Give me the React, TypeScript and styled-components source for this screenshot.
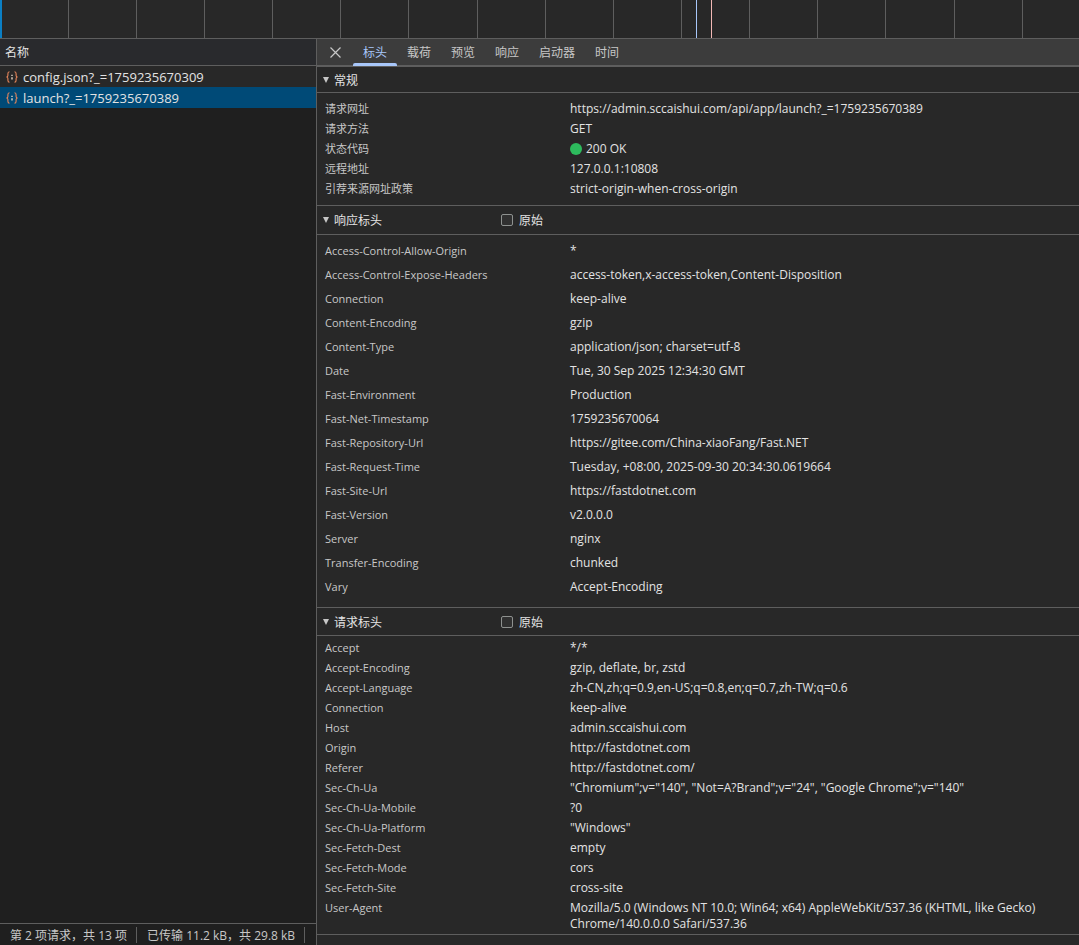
import * as React from "react";
import styled, { createGlobalStyle } from "styled-components";

const GlobalStyle = createGlobalStyle`
  html, body {
    margin: 0;
    padding: 0;
    height: 100%;
    overflow: hidden;
    background: #282828;
  }
  #root {
    height: 100%;
  }
`;

const fontStack = `"Open Sans", "Noto Sans CJK SC", sans-serif`;

const Page = styled.div`
  width: 1079px;
  height: 945px;
  display: flex;
  flex-direction: column;
  font-family: ${fontStack};
  font-size: 12px;
  color: #e3e3e3;
  overflow: hidden;
`;

const Overview = styled.div`
  height: 38px;
  flex: none;
  position: relative;
  background: #282828;
  border-bottom: 1px solid #5e5e5e;
`;

const GridLine = styled.div<{ $x: number; $color?: string }>`
  position: absolute;
  top: 0;
  bottom: 0;
  left: ${(p) => p.$x}px;
  width: 1px;
  background: ${(p) => p.$color ?? "#5e5e5e"};
`;

const LeftMarker = styled.div`
  position: absolute;
  top: 0;
  bottom: 0;
  left: 0;
  width: 2px;
  background: #0b7fc4;
`;

const Body = styled.div`
  flex: 1;
  min-height: 0;
  display: flex;
`;

const RequestPane = styled.div`
  width: 316px;
  flex: none;
  display: flex;
  flex-direction: column;
  background: #1f1f1f;
  border-right: 1px solid #5e5e5e;
`;

const NameHeader = styled.div`
  height: 26px;
  flex: none;
  display: flex;
  align-items: center;
  padding-left: 5px;
  font-size: 12px;
  color: #e3e3e3;
  background: #292a2d;
  border-bottom: 1px solid #5e5e5e;
`;

const RequestList = styled.div`
  flex: 1;
  min-height: 0;
`;

const RequestRow = styled.div<{ $selected?: boolean }>`
  height: 21px;
  display: flex;
  align-items: center;
  gap: 4px;
  padding-left: 5px;
  font-size: 13px;
  color: #e3e3e3;
  background: ${(p) => (p.$selected ? "#004a77" : "#282828")};
`;

const Footer = styled.div`
  height: 21px;
  flex: none;
  display: flex;
  align-items: center;
  font-size: 12px;
  color: #c7c7c7;
  border-top: 1px solid #5e5e5e;
`;

const FooterItem = styled.div`
  height: 16px;
  display: flex;
  align-items: center;
  padding: 0 9px 0 10px;
  border-right: 1px solid #5e5e5e;
  white-space: nowrap;
`;

const DetailPane = styled.div`
  flex: 1;
  min-width: 0;
  display: flex;
  flex-direction: column;
  background: #282828;
`;

const TabBar = styled.div`
  height: 26px;
  flex: none;
  display: flex;
  align-items: stretch;
  background: #3c3c3c;
  border-bottom: 2px solid #5e5e5e;
  box-sizing: content-box;
`;

const CloseButton = styled.div`
  width: 36px;
  flex: none;
  display: flex;
  align-items: center;
  justify-content: center;
  color: #c7c7c7;
`;

const Tab = styled.div<{ $active?: boolean }>`
  display: flex;
  align-items: center;
  padding: 0 10px;
  position: relative;
  font-size: 12px;
  color: ${(p) => (p.$active ? "#a8c7fa" : "#c7c7c7")};
  ${(p) =>
    p.$active &&
    `&::after {
      content: "";
      position: absolute;
      left: 0;
      right: 0;
      bottom: -1px;
      height: 3px;
      border-radius: 2px 2px 0 0;
      background: #a8c7fa;
    }`}
`;

const Sections = styled.div`
  flex: 1;
  min-height: 0;
  overflow: hidden;
`;

const SectionHeader = styled.div<{ $height: number }>`
  height: ${(p) => p.$height}px;
  display: flex;
  align-items: center;
  border-bottom: 1px solid #5e5e5e;
  font-size: 12px;
  color: #e3e3e3;
`;

const Caret = styled.span`
  width: 0;
  height: 0;
  margin: 0 5px 0 6px;
  border-left: 3.5px solid transparent;
  border-right: 3.5px solid transparent;
  border-top: 6px solid #c7c7c7;
`;

const SectionTitle = styled.span`
  width: 167px;
  flex: none;
`;

const RawToggle = styled.label`
  display: flex;
  align-items: center;
  gap: 6px;
`;

const CheckBox = styled.span`
  width: 10px;
  height: 10px;
  border: 1px solid #8e918f;
  border-radius: 2px;
  background: #303030;
`;

const Rows = styled.div<{ $padTop: number; $padBottom: number }>`
  padding: ${(p) => p.$padTop}px 0 ${(p) => p.$padBottom}px;
  border-bottom: 1px solid #5e5e5e;
`;

const Row = styled.div<{ $rowHeight: number }>`
  display: grid;
  grid-template-columns: 245px 1fr;
  padding-left: 8px;
  padding-right: 12px;
  min-height: ${(p) => p.$rowHeight}px;
  line-height: 16px;
  align-items: start;
  padding-top: ${(p) => (p.$rowHeight - 16) / 2}px;
  padding-bottom: ${(p) => (p.$rowHeight - 16) / 2}px;
  box-sizing: border-box;
`;

const RowName = styled.div`
  font-size: 11px;
  color: #c7c7c7;
`;

const RowValue = styled.div`
  font-size: 12px;
  color: #e3e3e3;
  display: flex;
  align-items: center;
  gap: 4px;
`;

const StatusDot = styled.span`
  width: 12px;
  height: 12px;
  border-radius: 50%;
  background: #2dbb5d;
`;

const FetchIcon = () => (
  <svg width="14" height="14" viewBox="0 0 14 14" fill="none" stroke="#e8875b" strokeWidth="1.1">
    <path d="M4.5 1.8C3 1.8 2.9 2.6 2.9 3.8V5.4C2.9 6.2 2.4 6.8 1.5 7C2.4 7.2 2.9 7.8 2.9 8.6V10.2C2.9 11.4 3 12.2 4.5 12.2" />
    <path d="M9.5 1.8C11 1.8 11.1 2.6 11.1 3.8V5.4C11.1 6.2 11.6 6.8 12.5 7C11.6 7.2 11.1 7.8 11.1 8.6V10.2C11.1 11.4 11 12.2 9.5 12.2" />
    <path d="M7 4.8V5.9M7 7.3V9.4" stroke="#f0e0d0" strokeWidth="1.3" />
  </svg>
);

const CloseIcon = () => (
  <svg width="11" height="11" viewBox="0 0 11 11" stroke="currentColor" strokeWidth="1.2">
    <path d="M0.5 0.5L10.5 10.5M10.5 0.5L0.5 10.5" />
  </svg>
);

const gridXs = [68, 136, 204, 272, 340, 408, 477, 545, 613, 681, 749, 817, 885, 954, 1022];

const generalRows: [string, React.ReactNode][] = [
  ["请求网址", "https://admin.sccaishui.com/api/app/launch?_=1759235670389"],
  ["请求方法", "GET"],
  [
    "状态代码",
    <>
      <StatusDot />
      200 OK
    </>,
  ],
  ["远程地址", "127.0.0.1:10808"],
  ["引荐来源网址政策", "strict-origin-when-cross-origin"],
];

const responseRows: [string, string][] = [
  ["Access-Control-Allow-Origin", "*"],
  ["Access-Control-Expose-Headers", "access-token,x-access-token,Content-Disposition"],
  ["Connection", "keep-alive"],
  ["Content-Encoding", "gzip"],
  ["Content-Type", "application/json; charset=utf-8"],
  ["Date", "Tue, 30 Sep 2025 12:34:30 GMT"],
  ["Fast-Environment", "Production"],
  ["Fast-Net-Timestamp", "1759235670064"],
  ["Fast-Repository-Url", "https://gitee.com/China-xiaoFang/Fast.NET"],
  ["Fast-Request-Time", "Tuesday, +08:00, 2025-09-30 20:34:30.0619664"],
  ["Fast-Site-Url", "https://fastdotnet.com"],
  ["Fast-Version", "v2.0.0.0"],
  ["Server", "nginx"],
  ["Transfer-Encoding", "chunked"],
  ["Vary", "Accept-Encoding"],
];

const requestRows: [string, string][] = [
  ["Accept", "*/*"],
  ["Accept-Encoding", "gzip, deflate, br, zstd"],
  ["Accept-Language", "zh-CN,zh;q=0.9,en-US;q=0.8,en;q=0.7,zh-TW;q=0.6"],
  ["Connection", "keep-alive"],
  ["Host", "admin.sccaishui.com"],
  ["Origin", "http://fastdotnet.com"],
  ["Referer", "http://fastdotnet.com/"],
  ["Sec-Ch-Ua", `"Chromium";v="140", "Not=A?Brand";v="24", "Google Chrome";v="140"`],
  ["Sec-Ch-Ua-Mobile", "?0"],
  ["Sec-Ch-Ua-Platform", `"Windows"`],
  ["Sec-Fetch-Dest", "empty"],
  ["Sec-Fetch-Mode", "cors"],
  ["Sec-Fetch-Site", "cross-site"],
  [
    "User-Agent",
    "Mozilla/5.0 (Windows NT 10.0; Win64; x64) AppleWebKit/537.36 (KHTML, like Gecko) Chrome/140.0.0.0 Safari/537.36",
  ],
];

const App = () => {
  return (
    <Page>
      <GlobalStyle />
      <Overview>
        <LeftMarker />
        {gridXs.map((x) => (
          <GridLine key={x} $x={x} />
        ))}
        <GridLine $x={696} $color="#a8c7fa" />
        <GridLine $x={711} $color="#f2b8b5" />
      </Overview>
      <Body>
        <RequestPane>
          <NameHeader>名称</NameHeader>
          <RequestList>
            <RequestRow>
              <FetchIcon />
              config.json?_=1759235670309
            </RequestRow>
            <RequestRow $selected>
              <FetchIcon />
              launch?_=1759235670389
            </RequestRow>
          </RequestList>
          <Footer>
            <FooterItem>第 2 项请求，共 13 项</FooterItem>
            <FooterItem>已传输 11.2 kB，共 29.8 kB</FooterItem>
          </Footer>
        </RequestPane>
        <DetailPane>
          <TabBar>
            <CloseButton>
              <CloseIcon />
            </CloseButton>
            <Tab $active>标头</Tab>
            <Tab>载荷</Tab>
            <Tab>预览</Tab>
            <Tab>响应</Tab>
            <Tab>启动器</Tab>
            <Tab>时间</Tab>
          </TabBar>
          <Sections>
            <SectionHeader $height={25}>
              <Caret />
              <SectionTitle>常规</SectionTitle>
            </SectionHeader>
            <Rows $padTop={6} $padBottom={6}>
              {generalRows.map(([name, value]) => (
                <Row key={name} $rowHeight={20}>
                  <RowName>{name}</RowName>
                  <RowValue>{value}</RowValue>
                </Row>
              ))}
            </Rows>
            <SectionHeader $height={28}>
              <Caret />
              <SectionTitle>响应标头</SectionTitle>
              <RawToggle>
                <CheckBox />
                原始
              </RawToggle>
            </SectionHeader>
            <Rows $padTop={4} $padBottom={8}>
              {responseRows.map(([name, value]) => (
                <Row key={name} $rowHeight={24}>
                  <RowName>{name}</RowName>
                  <RowValue>{value}</RowValue>
                </Row>
              ))}
            </Rows>
            <SectionHeader $height={27}>
              <Caret />
              <SectionTitle>请求标头</SectionTitle>
              <RawToggle>
                <CheckBox />
                原始
              </RawToggle>
            </SectionHeader>
            <Rows $padTop={2} $padBottom={0}>
              {requestRows.map(([name, value]) => (
                <Row key={name} $rowHeight={20}>
                  <RowName>{name}</RowName>
                  <RowValue>{value}</RowValue>
                </Row>
              ))}
            </Rows>
          </Sections>
        </DetailPane>
      </Body>
    </Page>
  );
};

export default App;
